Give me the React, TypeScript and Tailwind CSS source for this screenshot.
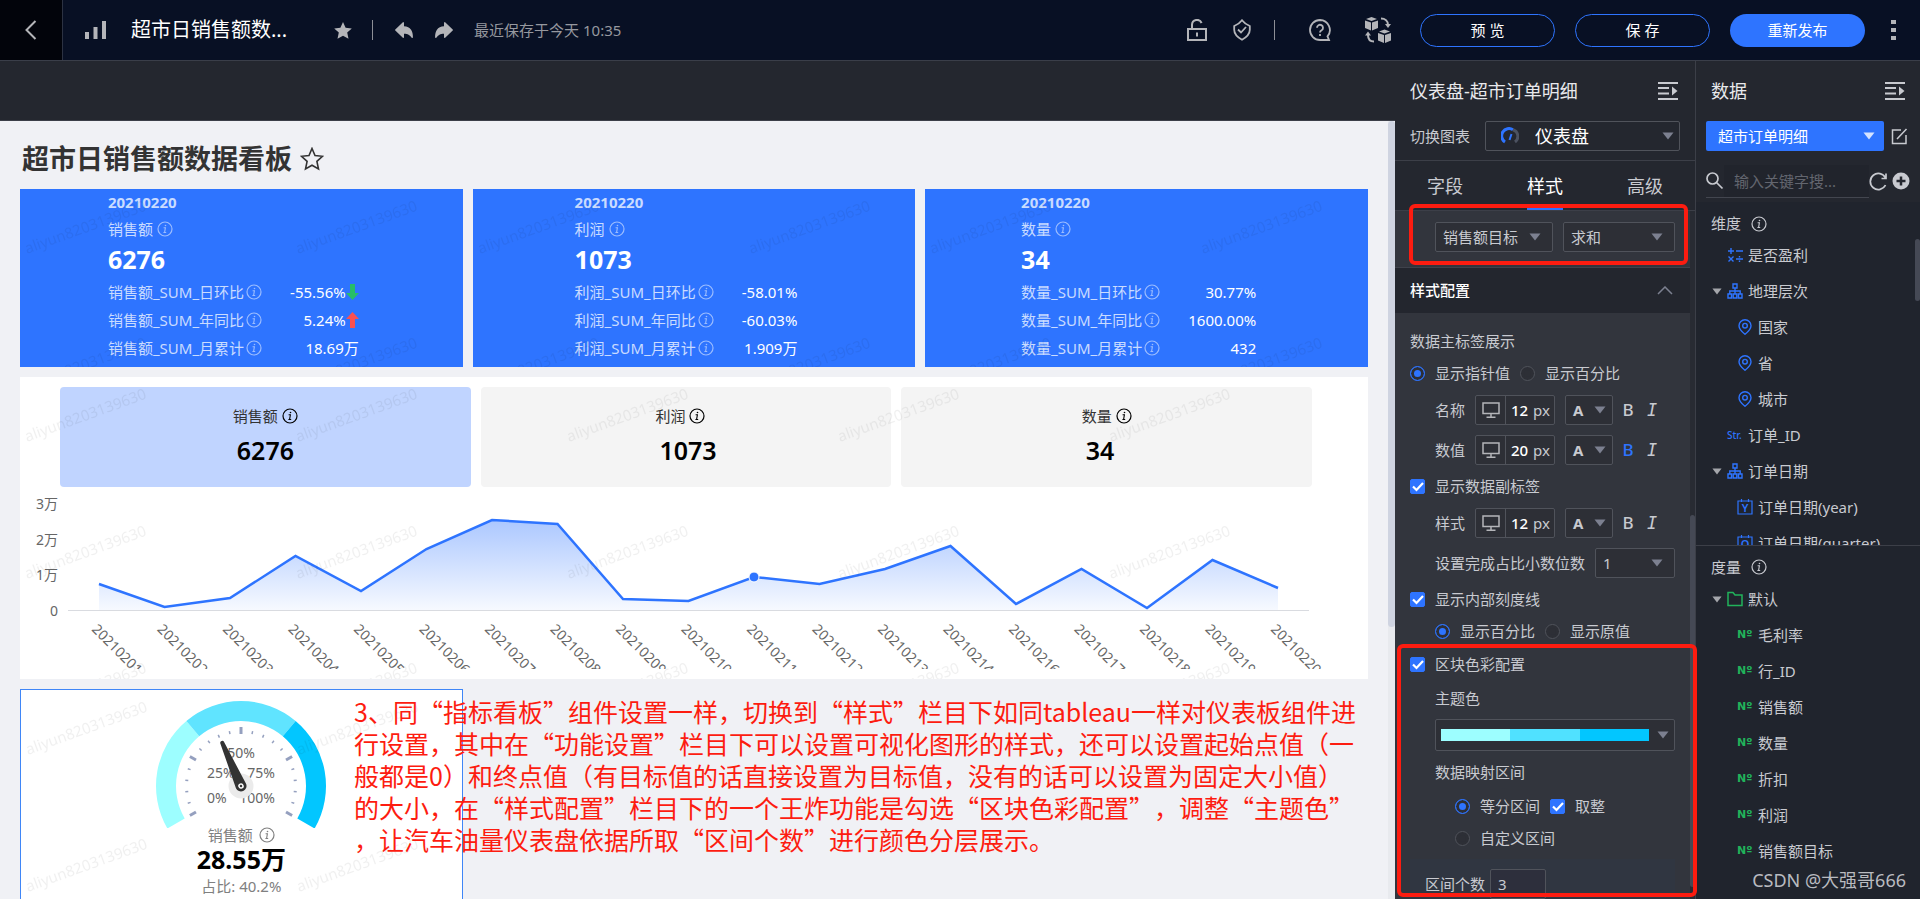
import { useId } from "react";
import type { ReactNode } from "react";
import { clsx } from "clsx";
import { IoArrowRedo, IoArrowUndo } from "react-icons/io5";

const kpiCards = [
  {
    name: "销售额",
    value: "6276",
    rows: [
      { label: "日环比", value: "-55.56%", trend: "down" },
      { label: "年同比", value: "5.24%", trend: "up" },
      { label: "月累计", value: "18.69万" },
    ],
  },
  {
    name: "利润",
    value: "1073",
    rows: [
      { label: "日环比", value: "-58.01%" },
      { label: "年同比", value: "-60.03%" },
      { label: "月累计", value: "1.909万" },
    ],
  },
  {
    name: "数量",
    value: "34",
    rows: [
      { label: "日环比", value: "30.77%" },
      { label: "年同比", value: "1600.00%" },
      { label: "月累计", value: "432" },
    ],
  },
];

const trend = [
  { date: "20210201", y: 97 },
  { date: "20210202", y: 120 },
  { date: "20210203", y: 111 },
  { date: "20210204", y: 69 },
  { date: "20210205", y: 104 },
  { date: "20210206", y: 62 },
  { date: "20210207", y: 33 },
  { date: "20210208", y: 37 },
  { date: "20210209", y: 112 },
  { date: "20210210", y: 114 },
  { date: "20210211", y: 90 },
  { date: "20210212", y: 97 },
  { date: "20210213", y: 82 },
  { date: "20210214", y: 59 },
  { date: "20210216", y: 117 },
  { date: "20210217", y: 82 },
  { date: "20210218", y: 121 },
  { date: "20210219", y: 73 },
  { date: "20210220", y: 101 },
];

const dimensions = [
  { label: "是否盈利", icon: "calc", level: 1 },
  { label: "地理层次", icon: "tree", level: 1, open: true },
  { label: "国家", icon: "pin", level: 2 },
  { label: "省", icon: "pin", level: 2 },
  { label: "城市", icon: "pin", level: 2 },
  { label: "订单_ID", icon: "str", level: 1 },
  { label: "订单日期", icon: "tree", level: 1, open: true },
  { label: "订单日期(year)", icon: "Y", level: 2 },
  { label: "订单日期(quarter)", icon: "Q", level: 2 },
];

const measures = [
  { label: "默认", icon: "folder", level: 1, open: true },
  { label: "毛利率", icon: "no", level: 2 },
  { label: "行_ID", icon: "no", level: 2 },
  { label: "销售额", icon: "no", level: 2 },
  { label: "数量", icon: "no", level: 2 },
  { label: "折扣", icon: "no", level: 2 },
  { label: "利润", icon: "no", level: 2 },
  { label: "销售额目标", icon: "no", level: 2 },
];

const notes = [
  "3、同“指标看板”组件设置一样，切换到“样式”栏目下如同tableau一样对仪表板组件进",
  "行设置，其中在“功能设置”栏目下可以设置可视化图形的样式，还可以设置起始点值（一",
  "般都是0）和终点值（有目标值的话直接设置为目标值，没有的话可以设置为固定大小值）",
  "的大小，在“样式配置”栏目下的一个王炸功能是勾选“区块色彩配置”，调整“主题色”",
  "，让汽车油量仪表盘依据所取“区间个数”进行颜色分层展示。",
];

function InfoIcon({ className }: { className?: string }) {
  return (
    <svg viewBox="0 0 16 16" className={clsx("size-4 shrink-0", className)} fill="none" stroke="currentColor">
      <circle cx="8" cy="8" r="7" strokeWidth="1.2" />
      <path d="M6.6 6.8h1.8l-.8 4.6M6.4 11.5h2.8" strokeWidth="1.1" />
      <circle cx="8.5" cy="4.5" r=".8" fill="currentColor" stroke="none" />
    </svg>
  );
}

function Caret({ small, className }: { small?: boolean; className?: string }) {
  return (
    <svg
      viewBox="0 0 12 8"
      className={clsx("pointer-events-none shrink-0", small ? "h-[7px] w-2.5" : "h-2 w-3", className)}
      fill="currentColor"
    >
      <path d="M.5.5h11L6 7.5z" />
    </svg>
  );
}

function CollapseIcon() {
  return (
    <svg viewBox="0 0 20 18" className="h-[18px] w-5" fill="none" stroke="#c8cad0" strokeWidth="2">
      <path d="M0 1h20M0 6h11M0 11.500h11M0 17h20" />
      <path d="M14 4.500l5.500 4.500-5.500 4.500z" fill="#c8cad0" stroke="none" />
    </svg>
  );
}

function Watermark() {
  const id = useId();
  return (
    <svg className="pointer-events-none absolute inset-0 size-full" aria-hidden="true">
      <defs>
        <pattern id={id} width="271" height="137" patternUnits="userSpaceOnUse">
          <text x="7" y="65" transform="rotate(-20 7 65)" fontSize="15" fill="#000" fillOpacity="0.06">
            aliyun8203139630
          </text>
        </pattern>
      </defs>
      <rect width="100%" height="100%" fill={`url(#${id})`} />
    </svg>
  );
}

function Header() {
  return (
    <header className="flex h-[61px] shrink-0 items-center border-b border-[#3a3e49] bg-[#081024] text-[#b4b5b9]">
      <button aria-label="返回" className="flex h-full w-[63px] items-center justify-center border-r border-[#2c3242] bg-[#02040b]">
        <svg viewBox="0 0 12 20" className="h-5 w-3" fill="none" stroke="currentColor" strokeWidth="2">
          <path d="M10.500 1L1.500 10l9 9" />
        </svg>
      </button>
      <svg viewBox="0 0 22 18" className="ml-[22px] h-[18px] w-[22px]" fill="currentColor">
        <path d="M0 11h4v7H0zM8.500 6h4v12h-4zM17 0h4v18h-4z" />
      </svg>
      <h1 className="ml-6 text-xl text-white">超市日销售额数...</h1>
      <button aria-label="收藏" className="ml-[47px]">
        <svg viewBox="0 0 18 17" className="h-[17px] w-[18px]" fill="currentColor">
          <path d="M9 0l2.600 5.700 6.200.7-4.600 4.200 1.300 6.200L9 13.700l-5.500 3.100 1.300-6.200L.2 6.400l6.200-.7z" />
        </svg>
      </button>
      <span className="ml-5 h-5 w-px bg-[#8d8f96]" />
      <button aria-label="撤销" className="ml-5">
        <IoArrowUndo className="size-[22px]" />
      </button>
      <button aria-label="重做" className="ml-[18px]">
        <IoArrowRedo className="size-[22px]" />
      </button>
      <span className="ml-[19px] text-[15px] text-[#96989f]">最近保存于今天 10:35</span>

      <div className="ml-auto flex items-center">
        <button aria-label="解锁">
          <svg viewBox="0 0 20 22" className="h-[22px] w-5" fill="none" stroke="currentColor" strokeWidth="2">
            <path d="M1 10h18v11H1zM5 10V6a5 5 0 0 1 9.600-2M10 13.500v4" />
          </svg>
        </button>
        <button aria-label="安全" className="ml-[26px]">
          <svg viewBox="0 0 18 22" className="h-[22px] w-[18px]" fill="none" stroke="currentColor" strokeWidth="1.800">
            <path d="M9 1.200c2 2.600 4.800 4.600 7.800 5.800v3.800c0 3.800-3 7.300-7.800 10-4.800-2.700-7.800-6.200-7.800-10V7c3-1.200 5.800-3.200 7.800-5.800z" />
            <path d="M5 10.500l3 3 5-5.500" />
          </svg>
        </button>
        <span className="ml-[23px] h-5 w-px bg-[#8d8f96]" />
        <button aria-label="帮助" className="ml-[34px]">
          <svg viewBox="0 0 22 22" className="size-[22px]" fill="none" stroke="currentColor" strokeWidth="1.800">
            <path d="M11 1a10 10 0 1 0 0 20h9l-1.500-3.600A10 10 0 0 0 11 1z" />
            <path d="M8 8.800a3 3 0 1 1 4.600 2.500c-1 .6-1.600 1-1.600 2.200M11 15v2" />
          </svg>
        </button>
        <button aria-label="资源" className="ml-[34px]">
          <svg viewBox="0 0 26 26" className="size-[26px]" fill="currentColor">
            <path d="M6.500 0L12 2 6.500 4 1 2zM0 3.500l6 2v8l-6-2.500zM13 3.500l-6 2v8L13 11zM19.500 12.500l5.500 2-5.500 2-5.500-2zM13 16l6 2v8l-6-2.500zM26 16l-6 2v8l6-2.500z" />
            <path d="M16 1.500c4 0 7 2.500 7 6.500M9 24.500c-4 0-6-2.500-6-6.500" fill="none" stroke="currentColor" strokeWidth="2" />
            <path d="M20 7h6l-3 4zM0 18.500h6l-3-4z" />
          </svg>
        </button>
        <button className="ml-[29px] h-[33px] w-[135px] rounded-full border border-[#2e74ff] text-[15px] text-white">预 览</button>
        <button className="ml-5 h-[33px] w-[135px] rounded-full border border-[#2e74ff] text-[15px] text-white">保 存</button>
        <button className="ml-5 h-[33px] w-[135px] rounded-full bg-[#2e74ff] text-[15px] text-white">重新发布</button>
        <button aria-label="更多" className="mr-6 ml-[26px]">
          <svg viewBox="0 0 5 20" className="h-5 w-[5px]" fill="currentColor">
            <path d="M0 0h5v4H0zM0 8h5v4H0zM0 16h5v4H0z" />
          </svg>
        </button>
      </div>
    </header>
  );
}

function KpiCard({ card }: { card: (typeof kpiCards)[number] }) {
  return (
    <section className="relative h-[178px] bg-[#2e74ff] text-[15px] text-white">
      <div className="mx-auto w-fit pr-4">
        <p className="h-[26px] leading-[26px] font-bold text-white/75">20210220</p>
        <p className="flex h-7 items-center gap-1 text-white/75">
          {card.name}
          <InfoIcon className="opacity-70" />
        </p>
        <p className="h-8 text-[25px] leading-8 font-bold">{card.value}</p>
        <dl className="pt-[3px]">
          {card.rows.map((row) => (
            <div key={row.label} className="flex h-7 items-center justify-between gap-7">
              <dt className="flex items-center gap-0.5 text-white/75">
                {card.name}_SUM_{row.label}
                <InfoIcon className="opacity-70" />
              </dt>
              <dd className="flex items-center">
                {row.value}
                {row.trend && (
                  <svg
                    viewBox="0 0 13 16"
                    className={clsx("h-4 w-[13px]", row.trend === "up" ? "rotate-180 text-[#fb5050]" : "text-[#27bd68]")}
                    fill="currentColor"
                  >
                    <path d="M4 0h5v9h4l-6.500 7L0 9h4z" />
                  </svg>
                )}
              </dd>
            </div>
          ))}
        </dl>
      </div>
      <Watermark />
    </section>
  );
}

function TrendChart() {
  const left = 79;
  const step = 65.5;
  const points = trend.map((p, i) => `${left + i * step},${p.y}`).join(" ");
  const right = left + (trend.length - 1) * step;
  return (
    <svg viewBox="0 0 1348 192" className="block w-full" fontSize="14" fill="#666">
      <defs>
        <linearGradient id="trend-fill" gradientUnits="userSpaceOnUse" x1="0" y1="33" x2="0" y2="123">
          <stop offset="0" stopColor="#2e74ff" stopOpacity="0.4" />
          <stop offset="1" stopColor="#2e74ff" stopOpacity="0.04" />
        </linearGradient>
        <clipPath id="trend-labels">
          <rect width="1348" height="182" />
        </clipPath>
      </defs>
      {["3万", "2万", "1万", "0"].map((label, i) => (
        <text key={label} x="38" y={22 + i * 35.5} textAnchor="end">
          {label}
        </text>
      ))}
      <path d="M48 123.500H1289" stroke="#d9dbe0" />
      <polygon points={`${left},123 ${points} ${right},123`} fill="url(#trend-fill)" />
      <polyline points={points} fill="none" stroke="#2e74ff" strokeWidth="2.500" />
      <circle cx={left + 10 * step} cy="90" r="5" fill="#2e74ff" stroke="#fff" />
      <g clipPath="url(#trend-labels)">
        {trend.map((p, i) => (
          <text key={p.date} transform={`translate(${left - 8 + i * step} 143) rotate(45)`}>
            {p.date}
          </text>
        ))}
      </g>
    </svg>
  );
}

function polar(radius: number, angle: number) {
  const rad = (angle * Math.PI) / 180;
  return `${(100 + radius * Math.cos(rad)).toFixed(2)} ${(96 - radius * Math.sin(rad)).toFixed(2)}`;
}

function Gauge() {
  const segments = ["#9dfeff", "#60e4ff", "#02c6ff"];
  const ticks = Array.from({ length: 21 }, (_, i) => i);
  return (
    <svg viewBox="0 0 200 138" className="block h-[138px] w-[200px]" fontSize="14" fill="#666">
      {segments.map((color, i) => {
        const from = 210 - i * 80;
        const to = from - 80;
        return (
          <path
            key={color}
            d={`M${polar(85, from)}A85 85 0 0 1 ${polar(85, to)}L${polar(65, to)}A65 65 0 0 0 ${polar(65, from)}z`}
            fill={color}
          />
        );
      })}
      {ticks.map((i) => {
        const major = i % 5 === 0;
        const angle = 210 - i * 12;
        return (
          <path
            key={i}
            d={`M${polar(major ? 52 : 53, angle)}L${polar(major ? 59 : 56, angle)}`}
            stroke="#95a0bf"
            strokeWidth={major ? 3 : 1.5}
          />
        );
      })}
      <text x="100" y="68" textAnchor="middle">50%</text>
      <text x="66" y="88">25%</text>
      <text x="134" y="88" textAnchor="end">75%</text>
      <text x="66" y="113">0%</text>
      <text x="134" y="113" textAnchor="end">100%</text>
      <circle cx="100" cy="96" r="12.500" fill="#ebebeb" />
      <g transform="rotate(-23.500 100 96)">
        <path d="M98 49a2 2 0 0 1 4 0l3.500 47a5.500 5.500 0 0 1-11 0z" fill="#333" />
        <circle cx="100" cy="96" r="2" fill="#333" stroke="#fff" strokeWidth="1.500" />
      </g>
    </svg>
  );
}

function Dashboard() {
  return (
    <main className="relative flex min-h-0 flex-1 overflow-hidden bg-[#f0f1f5]">
      <div className="min-w-0 flex-1 px-5">
        <div className="flex h-[68px] items-center gap-2 pt-2 pl-0.5">
          <h2 className="text-[27px] leading-8 font-semibold text-[#333]">超市日销售额数据看板</h2>
          <button aria-label="收藏看板">
            <svg viewBox="0 0 24 24" className="size-6" fill="none" stroke="#333" strokeWidth="1.600">
              <path d="M12 1.500l3 7 7.500.8-5.600 5 1.600 7.700L12 18.200 5.500 22l1.600-7.700-5.600-5L9 8.500z" />
            </svg>
          </button>
        </div>

        <div className="grid grid-cols-3 gap-2.5">
          {kpiCards.map((card) => (
            <KpiCard key={card.name} card={card} />
          ))}
        </div>

        <section className="relative mt-2.5 bg-white pt-2.5">
          <div className="mr-14 ml-10 grid grid-cols-3 gap-2.5">
            {kpiCards.map((card, i) => (
              <button
                key={card.name}
                className={clsx(
                  "flex h-[100px] justify-center rounded-sm pt-4",
                  i === 0 ? "bg-[#c0d4ff]" : "bg-[#f4f4f4]",
                )}
              >
                <span className="flex flex-col items-start gap-[3px]">
                  <span className="flex h-[26px] items-center gap-1 text-[15px] text-[#333]">
                    {card.name}
                    <InfoIcon className="text-black" />
                  </span>
                  <span className="pl-1 text-[25px] leading-9 font-semibold text-black">{card.value}</span>
                </span>
              </button>
            ))}
          </div>
          <TrendChart />
          <Watermark />
        </section>

        <div className="mt-2.5 grid grid-cols-3 gap-2.5">
          <section className="relative flex h-[300px] flex-col items-center border border-[#3f86f7] bg-white">
            <Gauge />
            <p className="flex h-3.5 items-center gap-1.5 text-[15px] text-[#808080]">
              销售额
              <InfoIcon />
            </p>
            <p className="h-[34px] text-[25px] leading-[34px] font-bold text-black">28.55万</p>
            <p className="text-[15px] leading-5 text-[#808080]">占比: 40.2%</p>
            <Watermark />
          </section>
        </div>
      </div>
      <div className="w-[7px] bg-[#e8eaee]">
        <div className="h-[65%] rounded-full bg-[#cfd4e1]" />
      </div>

      {/* red annotation written over the board */}
      <div className="pointer-events-none absolute top-[574px] left-[354px] font-['Noto_Sans_CJK_SC',sans-serif] text-[25px] leading-8 whitespace-nowrap text-[#fd1c10] [text-spacing-trim:space-all]">
        {notes.map((line) => (
          <p key={line}>{line}</p>
        ))}
      </div>
    </main>
  );
}

function Select({ label, options, className }: { label: string; options: string[]; className?: string }) {
  return (
    <span className={clsx("relative flex h-[30px] items-center", className)}>
      <select
        aria-label={label}
        className="size-full appearance-none rounded-xs border border-[#50535b] bg-[#2d2f36] pl-[7px] text-[15px] text-[#c8cad0]"
      >
        {options.map((option) => (
          <option key={option}>{option}</option>
        ))}
      </select>
      <Caret className="absolute right-3 text-[#7c8090]" />
    </span>
  );
}

function Check({ children }: { children: ReactNode }) {
  return (
    <label className="flex items-center gap-2.5">
      <span className="grid size-[15px]">
        <input
          type="checkbox"
          defaultChecked
          className="peer col-start-1 row-start-1 size-[15px] appearance-none rounded-xs border border-[#50535b] checked:border-[#2e74ff] checked:bg-[#2e74ff]"
        />
        <svg
          viewBox="0 0 15 15"
          className="pointer-events-none invisible col-start-1 row-start-1 size-[15px] peer-checked:visible"
          fill="none"
          stroke="#fff"
          strokeWidth="2.200"
        >
          <path d="M3 7.500l3.500 3.500L13 4" />
        </svg>
      </span>
      {children}
    </label>
  );
}

function Radio({ name, checked, children }: { name: string; checked?: boolean; children: ReactNode }) {
  return (
    <label className="flex items-center gap-2.5">
      <input
        type="radio"
        name={name}
        defaultChecked={checked}
        className="size-[15px] appearance-none rounded-full border border-[#50535b] bg-[#2d2f36] shadow-[inset_0_0_0_3px_#2d2f36] checked:border-[#2e74ff] checked:bg-[#2e74ff]"
      />
      {children}
    </label>
  );
}

function FontRow({ label, size, bold }: { label: string; size: string; bold?: boolean }) {
  return (
    <div className="flex h-10 items-center pl-[25px]">
      <span className="w-10">{label}</span>
      <span className="flex h-[30px] w-20 items-center rounded-xs border border-[#50535b] bg-[#2d2f36]">
        <span className="flex h-full w-[30px] items-center justify-center border-r border-[#50535b]">
          <svg viewBox="0 0 18 16" className="h-4 w-[18px]" fill="none" stroke="#b4b5b9" strokeWidth="1.500">
            <path d="M1 1h16v10.500H1zM4.500 15.200h9M9 12v3" />
          </svg>
        </span>
        <input
          aria-label={`${label}字号`}
          defaultValue={size}
          className="ml-[5px] w-[22px] bg-transparent text-[15px] font-medium text-white"
        />
        <span>px</span>
      </span>
      <button aria-label={`${label}颜色`} className="ml-2.5 flex h-[30px] w-12 items-center justify-between rounded-xs border border-[#50535b] bg-[#2d2f36] pr-1.5 pl-[7px]">
        <span className="leading-7 font-bold">A</span>
        <Caret className="text-[#7c8090]" />
      </button>
      <button aria-label="加粗" className={clsx("ml-2 w-3.5 text-[17px] leading-[30px] font-medium", bold && "text-[#2e74ff]")}>B</button>
      <button aria-label="斜体" className="ml-2.5 w-3.5 font-['DejaVu_Sans_Mono',monospace] text-[17px] leading-[30px] italic">I</button>
    </div>
  );
}

function StylePanel() {
  return (
    <aside className="relative flex w-[300px] shrink-0 flex-col bg-[#24272f] text-[15px] text-[#c8cad0]">
      <div className="flex h-[60px] shrink-0 items-center justify-between pr-[17px] pl-[15px]">
        <h2 className="text-lg text-[#e8e9ec]">仪表盘-超市订单明细</h2>
        <button aria-label="收起样式面板">
          <CollapseIcon />
        </button>
      </div>
      <div className="flex h-10 shrink-0 items-start border-b border-[#3c3f48] px-[15px]">
        <label htmlFor="chart-type" className="w-[75px] leading-[30px]">切换图表</label>
        <span className="relative flex h-[30px] flex-1 items-center">
          <select id="chart-type" className="size-full appearance-none rounded-xs border border-[#50535b] bg-[#24272f] pl-[49px] text-lg text-white">
            <option>仪表盘</option>
          </select>
          <svg viewBox="0 0 18 18" className="pointer-events-none absolute left-4 size-[18px]" fill="none" strokeWidth="3">
            <path d="M4 15A7 7 0 0 1 12 2.700" stroke="#2e74ff" />
            <path d="M12 2.700A7 7 0 0 1 14 15" stroke="#4c5260" />
            <path d="M8.500 13l2-6" stroke="#2e74ff" strokeWidth="2" />
          </svg>
          <Caret className="absolute right-1.5 text-[#7c8090]" />
        </span>
      </div>
      <div role="tablist" className="flex h-[50px] shrink-0 justify-around border-b border-[#3c3f48] text-lg">
        <button role="tab" aria-selected="false">字段</button>
        <button role="tab" aria-selected="true" className="border-b-[3px] border-[#2e74ff] pt-[3px] text-white">样式</button>
        <button role="tab" aria-selected="false">高级</button>
      </div>

      <div className="flex min-h-0 flex-1">
        <div className="min-w-0 flex-1 overflow-hidden bg-[#32353d]">
          <div className="flex h-[57px] gap-2.5 border-b border-[#3f424b] pt-[11px] pr-[15px] pl-10">
            <Select label="指标" options={["销售额目标"]} className="w-[118px]" />
            <Select label="聚合方式" options={["求和"]} className="flex-1" />
          </div>
          <button className="flex h-[45px] w-full items-center justify-between bg-[#23262e] pr-[17px] pl-[15px] font-medium text-white">
            样式配置
            <svg viewBox="0 0 16 9" className="h-[9px] w-4" fill="none" stroke="#7c8090" strokeWidth="1.500">
              <path d="M1 8l7-7 7 7" />
            </svg>
          </button>

          <div className="px-[15px] pt-[13px]">
            <p className="flex h-[30px] items-center">数据主标签展示</p>
            <div className="flex h-[34px] items-center gap-2.5">
              <Radio name="main-label" checked>显示指针值</Radio>
              <Radio name="main-label">显示百分比</Radio>
            </div>
            <FontRow label="名称" size="12" />
            <FontRow label="数值" size="20" bold />
            <div className="flex h-[33px] items-center">
              <Check>显示数据副标签</Check>
            </div>
            <FontRow label="样式" size="12" />
            <div className="flex h-10 items-center gap-2.5 pl-[25px]">
              <span className="shrink-0">设置完成占比小数位数</span>
              <Select label="小数位数" options={["1"]} className="flex-1" />
            </div>
            <div className="flex h-8 items-center">
              <Check>显示内部刻度线</Check>
            </div>
            <div className="flex h-8 items-center gap-2.5 pl-[25px]">
              <Radio name="tick-label" checked>显示百分比</Radio>
              <Radio name="tick-label">显示原值</Radio>
            </div>
            <div className="flex h-[34px] items-center">
              <Check>区块色彩配置</Check>
            </div>
            <div className="pl-[25px]">
              <p className="flex h-[35px] items-center">主题色</p>
              <button aria-label="主题色" className="my-[3px] flex h-8 w-full items-center gap-2 rounded-xs border border-[#50535b] bg-[#2d2f36] px-[5px]">
                <span className="flex h-3 flex-1">
                  <span className="flex-1 bg-[#9dfeff]" />
                  <span className="flex-1 bg-[#50e1ff]" />
                  <span className="flex-1 bg-[#02c6ff]" />
                </span>
                <Caret className="text-[#7c8090]" />
              </button>
              <p className="flex h-9 items-center">数据映射区间</p>
              <div className="flex h-8 items-center gap-2.5 pl-5">
                <Radio name="range" checked>等分区间</Radio>
                <Check>取整</Check>
              </div>
              <div className="flex h-8 items-center pl-5">
                <Radio name="range">自定义区间</Radio>
              </div>
            </div>
            <div className="mt-[5px] flex items-center gap-[5px] bg-[#303641] px-[15px] py-2.5">
              <label htmlFor="range-count">区间个数</label>
              <input
                id="range-count"
                defaultValue="3"
                className="h-[30px] w-14 rounded-xs border border-[#50535b] bg-[#2d2f3c] pl-[7px] text-[15px]"
              />
            </div>
          </div>
        </div>
        <div className="flex w-[5px] flex-col bg-[#282b33] pt-[304px] pb-3">
          <div className="flex-1 rounded-full bg-[#454955]" />
        </div>
      </div>

      {/* highlight frames around the two settings */}
      <div className="pointer-events-none absolute top-[143px] right-[7px] left-[14px] h-[61px] rounded-md border-4 border-[#fd1c10]" />
      <div className="pointer-events-none absolute -right-0.5 bottom-0.5 left-0.5 z-10 h-[253px] rounded-md border-4 border-[#fd1c10]" />
    </aside>
  );
}

function FieldIcon({ icon }: { icon: string }) {
  if (icon === "str") {
    return <span className="w-4 text-[10px] leading-4 font-medium text-[#2e74ff]">Str.</span>;
  }
  if (icon === "no") {
    return <span className="w-4 font-['DejaVu_Sans',sans-serif] text-[11px] leading-4 font-bold text-[#21b35b]">Nº</span>;
  }
  if (icon === "folder") {
    return (
      <svg viewBox="0 0 16 16" className="size-4" fill="none" stroke="#21b35b" strokeWidth="1.500">
        <path d="M1 1.500h5l2 2.500h7v10.500H1z" />
      </svg>
    );
  }
  if (icon === "Y" || icon === "Q") {
    return (
      <svg viewBox="0 0 16 16" className="size-4" fill="none" stroke="#2e74ff" strokeWidth="1.200">
        <path d="M1 2h14v13H1zM4.500 0v3M11.500 0v3" />
        <text x="8" y="12.500" textAnchor="middle" fontSize="11" fill="#2e74ff" stroke="none" fontWeight="600">
          {icon}
        </text>
      </svg>
    );
  }
  return (
    <svg viewBox="0 0 16 16" className="size-4" fill="none" stroke="#2e74ff" strokeWidth="1.400">
      {icon === "calc" && <path d="M1 4h6M4 1v6M9 4h7M1.500 9.500l5 5M6.500 9.500l-5 5M9 12h7M12.500 9v1.500M12.500 13.500V15" />}
      {icon === "tree" && <path d="M6 1h4v4H6zM1 11h3.500v4H1zM6.200 11h3.600v4H6.200zM11.500 11H15v4h-3.500zM8 5v6M2.800 11V8h10.400v3" />}
      {icon === "pin" && (
        <>
          <path d="M8 15.300C4 12 2 9.500 2 6.700a6 6 0 0 1 12 0c0 2.800-2 5.300-6 8.600z" />
          <circle cx="8" cy="6.700" r="2.300" />
        </>
      )}
    </svg>
  );
}

function FieldList({ items }: { items: { label: string; icon: string; level: number; open?: boolean }[] }) {
  return (
    <ul>
      {items.map((item) => (
        <li key={item.label} className={clsx("flex h-9 items-center", item.level === 1 ? "pl-4" : "pl-[26px]")}>
          <span className="w-[15px]">{item.open && <Caret small className="text-[#a4a6ab]" />}</span>
          <FieldIcon icon={item.icon} />
          <span className="ml-[5px] whitespace-nowrap">{item.label}</span>
        </li>
      ))}
    </ul>
  );
}

function DataPanel() {
  return (
    <aside className="relative flex w-[225px] shrink-0 flex-col border-l border-[#3c3f48] bg-[#24272f] text-[15px] text-[#c8cad0]">
      <div className="flex h-[60px] shrink-0 items-center justify-between px-[15px]">
        <h2 className="text-lg text-[#e8e9ec]">数据</h2>
        <button aria-label="收起数据面板">
          <CollapseIcon />
        </button>
      </div>
      <div className="flex items-center gap-[7px] pr-3 pl-2.5">
        <span className="relative flex h-[30px] flex-1 items-center">
          <select aria-label="数据集" className="size-full appearance-none rounded-xs bg-[#2e74ff] pl-3 text-[15px] text-white">
            <option>超市订单明细</option>
          </select>
          <Caret className="absolute right-[9px] text-[#d5e3ff]" />
        </span>
        <button aria-label="编辑数据集">
          <svg viewBox="0 0 17 17" className="size-[17px]" fill="none" stroke="#c8cad0" strokeWidth="1.500">
            <path d="M10 2H1.500v13.500H15V7M6 11L15.500 1" />
          </svg>
        </button>
      </div>
      <div className="mt-[13px] mb-1 flex h-[34px] items-center px-2.5">
        <div className="flex h-full flex-1 items-center border-b border-[#43464f]">
          <svg viewBox="0 0 18 18" className="size-[18px] shrink-0" fill="none" stroke="#c8cad0" strokeWidth="1.700">
            <circle cx="6.500" cy="6.500" r="5.500" />
            <path d="M10.500 10.500l6 6" />
          </svg>
          <input aria-label="搜索字段" placeholder="输入关键字搜..." className="h-8 w-full min-w-0 bg-[#21242c] pl-2.5 text-[15px] placeholder:text-[#63666f]" />
        </div>
        <button aria-label="刷新">
          <svg viewBox="0 0 19 19" className="size-[19px]" fill="none" stroke="#c8cad0" strokeWidth="1.700">
            <path d="M16.500 13A8 8 0 1 1 16.500 6M17 1.500v5h-4.500" />
          </svg>
        </button>
        <button aria-label="新建字段" className="ml-1">
          <svg viewBox="0 0 18 18" className="size-[18px]" fill="none">
            <circle cx="9" cy="9" r="8.500" fill="#c8cad0" />
            <path d="M4.500 9h9M9 4.500v9" stroke="#24272f" strokeWidth="2.500" />
          </svg>
        </button>
      </div>

      <section className="flex h-[344px] shrink-0 overflow-hidden border-b border-[#3c3f48] bg-[#20242d]">
        <div className="min-w-0 flex-1">
          <h3 className="flex h-[35px] items-center gap-2.5 pt-2 pl-[15px]">
            维度
            <InfoIcon />
          </h3>
          <FieldList items={dimensions} />
        </div>
        <div className="w-[5px] pt-[37px]">
          <div className="h-[62px] rounded-full bg-[#454955]" />
        </div>
      </section>
      <section className="min-h-0 flex-1 overflow-hidden bg-[#20242d]">
        <h3 className="flex h-[35px] items-center gap-2.5 pt-[7px] pl-[15px]">
          度量
          <InfoIcon />
        </h3>
        <FieldList items={measures} />
      </section>
      <p className="absolute right-[14px] bottom-[5px] text-lg text-[#b9bbc0]">CSDN @大强哥666</p>
    </aside>
  );
}

export default function App() {
  return (
    <div
      lang="zh-CN"
      className="flex h-screen flex-col overflow-hidden font-['Noto_Sans','Noto_Sans_CJK_SC',sans-serif]"
    >
      <Header />
      <div className="flex min-h-0 flex-1">
        <div className="flex min-w-0 flex-1 flex-col">
          <div className="h-[60px] shrink-0 border-b border-[#3c3f48] bg-[#24272f]" />
          <Dashboard />
        </div>
        <StylePanel />
        <DataPanel />
      </div>
    </div>
  );
}
